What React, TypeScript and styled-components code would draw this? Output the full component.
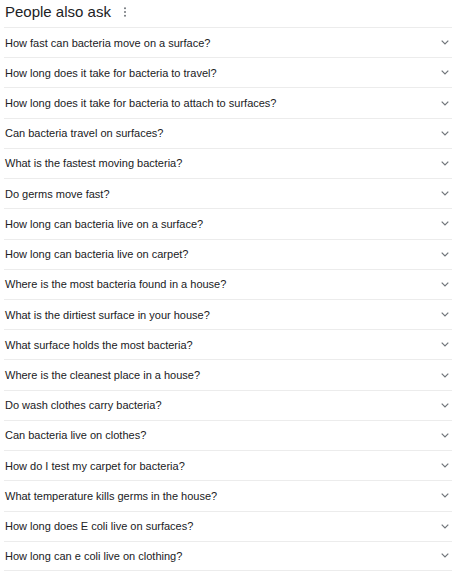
import React from "react";
import styled, { createGlobalStyle } from "styled-components";

const Global = createGlobalStyle`
  html, body { margin: 0; padding: 0; background: #ffffff; }
  body { font-family: "Liberation Sans", Arial, sans-serif; color: #202124; }
`;

const Wrap = styled.div`
  width: 448px;
  padding-left: 4px;
`;

const Header = styled.div`
  display: flex;
  align-items: center;
  height: 27px;
  padding-left: 1px;
  gap: 12px;
  box-sizing: border-box;
  padding-bottom: 3px;
`;

const Title = styled.h2`
  margin: 0;
  font-size: 15px;
  font-weight: 400;
  color: #202124;
  line-height: 18px;
`;

const Kebab = styled.svg`
  width: 4px;
  height: 10px;
  fill: #70757a;
`;

const List = styled.div`
  display: flex;
  flex-direction: column;
`;

const Row = styled.div`
  display: flex;
  align-items: center;
  justify-content: space-between;
  height: 30.22px;
  box-sizing: border-box;
  border-top: 1px solid #ececec;
  padding-left: 1px;
  padding-right: 3px;
  &:last-child {
    border-bottom: 1px solid #ececec;
  }
`;

const Question = styled.span`
  font-size: 11px;
  color: #202124;
  line-height: 14px;
`;

const Chevron = styled.svg`
  width: 8px;
  height: 5px;
  fill: none;
  stroke: #70757a;
  stroke-width: 1.2;
`;

const questions = [
  "How fast can bacteria move on a surface?",
  "How long does it take for bacteria to travel?",
  "How long does it take for bacteria to attach to surfaces?",
  "Can bacteria travel on surfaces?",
  "What is the fastest moving bacteria?",
  "Do germs move fast?",
  "How long can bacteria live on a surface?",
  "How long can bacteria live on carpet?",
  "Where is the most bacteria found in a house?",
  "What is the dirtiest surface in your house?",
  "What surface holds the most bacteria?",
  "Where is the cleanest place in a house?",
  "Do wash clothes carry bacteria?",
  "Can bacteria live on clothes?",
  "How do I test my carpet for bacteria?",
  "What temperature kills germs in the house?",
  "How long does E coli live on surfaces?",
  "How long can e coli live on clothing?",
];

export default function App() {
  return (
    <>
      <Global />
      <Wrap>
        <Header>
          <Title>People also ask</Title>
          <Kebab viewBox="0 0 4 10">
            <circle cx="2" cy="1.3" r="1" />
            <circle cx="2" cy="5" r="1" />
            <circle cx="2" cy="8.7" r="1" />
          </Kebab>
        </Header>
        <List>
          {questions.map((q) => (
            <Row key={q}>
              <Question>{q}</Question>
              <Chevron viewBox="0 0 8 5">
                <polyline points="0.7,0.7 4,4 7.3,0.7" />
              </Chevron>
            </Row>
          ))}
        </List>
      </Wrap>
    </>
  );
}
